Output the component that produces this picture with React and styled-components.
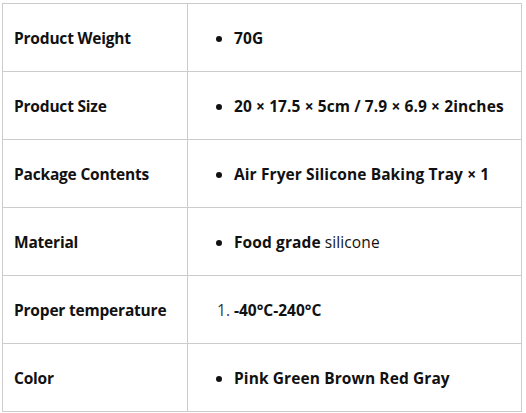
import styled, { createGlobalStyle } from 'styled-components';

const GlobalStyle = createGlobalStyle`
  body {
    margin: 0;
    background: #fff;
    font-family: 'Open Sans', 'Noto Sans', sans-serif;
    color: #111;
  }
`;

const Page = styled.div`
  padding: 3px 4px 0 2px;
`;

const Table = styled.table`
  width: 520px;
  border-collapse: collapse;
  font-size: 15.5px;
`;

const Row = styled.tr`
  height: 68px;
`;

const Label = styled.td`
  width: 162px;
  padding: 0 11px;
  border: 1px solid #cccccc;
  font-weight: 700;
  vertical-align: middle;
  letter-spacing: -0.2px;
`;

const Value = styled.td`
  padding: 0 8px;
  border: 1px solid #cccccc;
  vertical-align: middle;
`;

const Bullets = styled.ul`
  margin: 0;
  padding-left: 38px;
  font-weight: 700;
  letter-spacing: 0.1px;
`;

const Numbers = styled.ol`
  margin: 0;
  padding-left: 38px;
  font-weight: 700;
  li::marker {
    font-weight: 400;
    color: #333;
  }
`;

const Plain = styled.span`
  font-weight: 400;
`;

const specs = [
  { label: 'Product Weight', value: '70G' },
  { label: 'Product Size', value: '20 × 17.5 × 5cm / 7.9 × 6.9 × 2inches' },
  { label: 'Package Contents', value: 'Air Fryer Silicone Baking Tray × 1' },
  {
    label: 'Material',
    value: (
      <>
        Food grade <Plain>silicone</Plain>
      </>
    ),
  },
  { label: 'Proper temperature', value: '-40°C-240°C', ordered: true },
  { label: 'Color', value: 'Pink Green Brown Red Gray' },
];

const App = () => {
  return (
    <Page>
      <GlobalStyle />
      <Table>
        <tbody>
          {specs.map((spec) => (
            <Row key={spec.label}>
              <Label>{spec.label}</Label>
              <Value>
                {spec.ordered ? (
                  <Numbers>
                    <li>{spec.value}</li>
                  </Numbers>
                ) : (
                  <Bullets>
                    <li>{spec.value}</li>
                  </Bullets>
                )}
              </Value>
            </Row>
          ))}
        </tbody>
      </Table>
    </Page>
  );
};

export default App;
